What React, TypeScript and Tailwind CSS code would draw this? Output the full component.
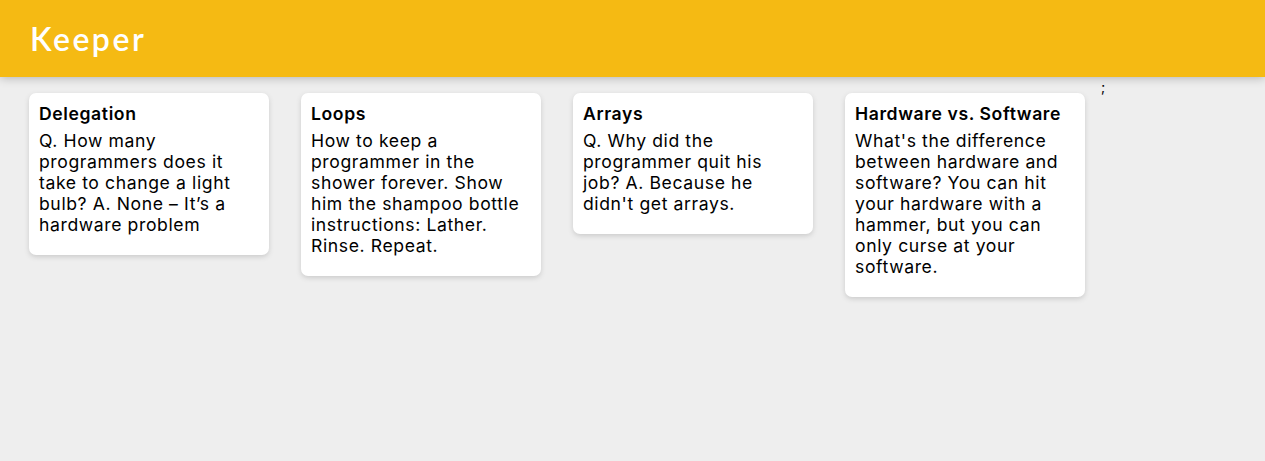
import React from 'react';

type Note = { title: string; lines: string[] };

const NOTES: Note[] = [
  {
    title: 'Delegation',
    lines: ['Q. How many', 'programmers does it', 'take to change a light', 'bulb? A. None \u2013 It\u2019s a', 'hardware problem'],
  },
  {
    title: 'Loops',
    lines: ['How to keep a', 'programmer in the', 'shower forever. Show', 'him the shampoo bottle', 'instructions: Lather.', 'Rinse. Repeat.'],
  },
  {
    title: 'Arrays',
    lines: ['Q. Why did the', 'programmer quit his', 'job? A. Because he', "didn't get arrays."],
  },
  {
    title: 'Hardware vs. Software',
    lines: [
      "What's the difference",
      'between hardware and',
      'software? You can hit',
      'your hardware with a',
      'hammer, but you can',
      'only curse at your',
      'software.',
    ],
  },
];

const NoteCard: React.FC<{ note: Note }> = ({ note }) => (
  <div className="w-[240px] shrink-0 mt-4 bg-white rounded-[7px] shadow-[0_2px_5px_#ccc] p-[10px]">
    <h1 className="text-[17.6px] leading-[21px] font-semibold text-black mb-[6px] tracking-[0.6px]">{note.title}</h1>
    <p className="text-[17.6px] leading-[21px] text-black mb-[10px] whitespace-nowrap tracking-[0.6px]">
      {note.lines.map((line, i) => (
        <span key={i} className="block">
          {line}
        </span>
      ))}
    </p>
  </div>
);

export default function App() {
  return (
    <div className="min-h-[461px] bg-[#eeeeee] font-['Inter',sans-serif]">
      <header className="h-[77px] bg-[#f5ba13] px-[30px] flex items-center shadow-[0_0_10px_0_rgba(0,0,0,0.3)] relative z-10">
        <h1 className="text-white text-[32px] font-semibold font-['Lato',sans-serif] tracking-[2.5px]">Keeper</h1>
      </header>
      <main className="flex items-start gap-8 pl-[29px]">
        {NOTES.map((n) => (
          <NoteCard key={n.title} note={n} />
        ))}
        <span className="-ml-4 text-[14px] leading-[20px] text-black">;</span>
      </main>
    </div>
  );
}
